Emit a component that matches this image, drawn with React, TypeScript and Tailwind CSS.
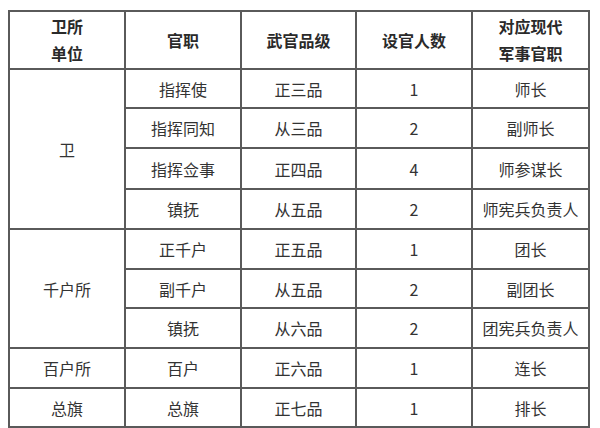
const rows: { unit?: string; span?: number; title: string; rank: string; count: string; modern: string; h: string }[] = [
  { unit: '卫', span: 4, title: '指挥使', rank: '正三品', count: '1', modern: '师长', h: 'h-[39px]' },
  { title: '指挥同知', rank: '从三品', count: '2', modern: '副师长', h: 'h-[40px]' },
  { title: '指挥佥事', rank: '正四品', count: '4', modern: '师参谋长', h: 'h-[41px]' },
  { title: '镇抚', rank: '从五品', count: '2', modern: '师宪兵负责人', h: 'h-[40px]' },
  { unit: '千户所', span: 3, title: '正千户', rank: '正五品', count: '1', modern: '团长', h: 'h-[40px]' },
  { title: '副千户', rank: '从五品', count: '2', modern: '副团长', h: 'h-[39px]' },
  { title: '镇抚', rank: '从六品', count: '2', modern: '团宪兵负责人', h: 'h-[40px]' },
  { unit: '百户所', span: 1, title: '百户', rank: '正六品', count: '1', modern: '连长', h: 'h-[40px]' },
  { unit: '总旗', span: 1, title: '总旗', rank: '正七品', count: '1', modern: '排长', h: 'h-[39px]' },
];

const cell = 'border-2 border-[#5a5a5a] text-center align-middle p-0';

export default function App() {
  return (
    <div
      className="w-[600px] h-[428px] bg-white pt-[10px] pl-[8px] overflow-hidden text-[#333] text-[16px]"
      style={{ fontFamily: '"Noto Sans CJK SC", "Noto Sans", sans-serif' }}
    >
      <table className="table-fixed border-collapse w-[580px]">
        <thead>
          <tr className="h-[58px] font-bold text-[#2a2a2a]">
            <th className={`${cell} w-[116px] leading-[27px]`}>卫所<br />单位</th>
            <th className={`${cell} w-[116px]`}>官职</th>
            <th className={`${cell} w-[115px]`}>武官品级</th>
            <th className={`${cell} w-[116px]`}>设官人数</th>
            <th className={`${cell} w-[117px] leading-[27px]`}>对应现代<br />军事官职</th>
          </tr>
        </thead>
        <tbody>
          {rows.map((r, i) => (
            <tr key={i} className={r.h}>
              {r.unit && (
                <td rowSpan={r.span} className={cell}>{r.unit}</td>
              )}
              <td className={cell}>{r.title}</td>
              <td className={cell}>{r.rank}</td>
              <td className={cell}>{r.count}</td>
              <td className={cell}>{r.modern}</td>
            </tr>
          ))}
        </tbody>
      </table>
    </div>
  );
}
